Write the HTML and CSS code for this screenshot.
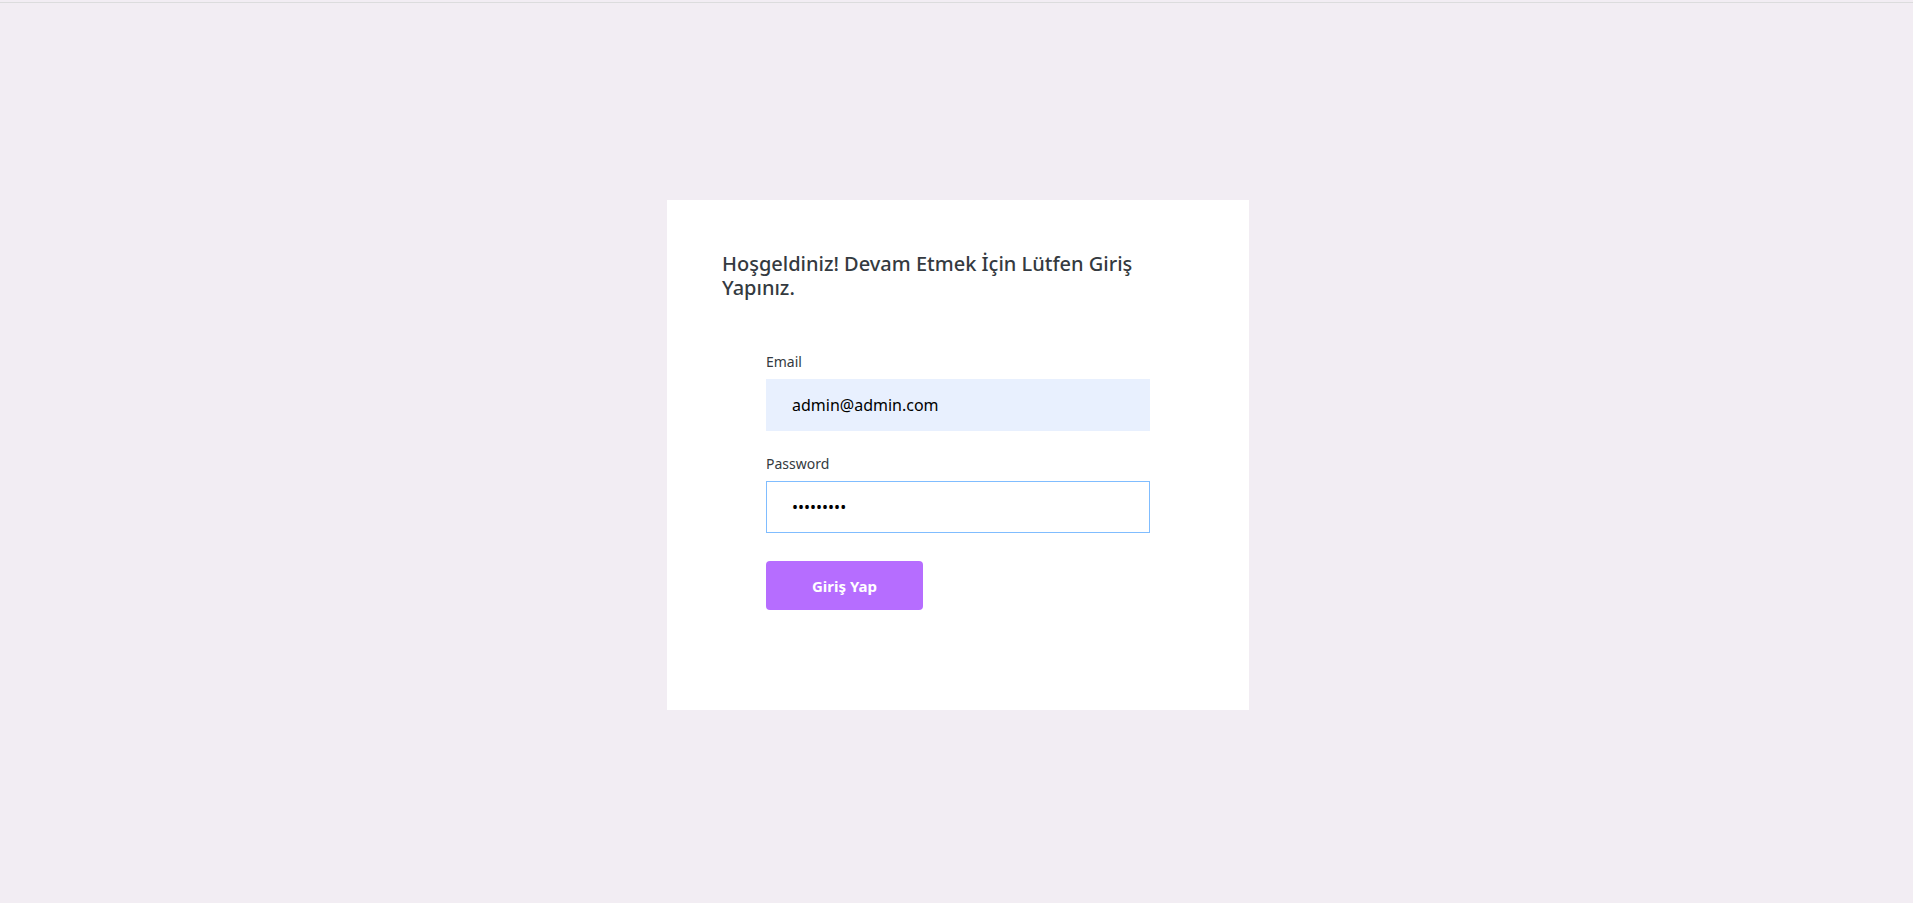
FILE: index.html
```html
<!DOCTYPE html>
<html lang="tr">
<head>
<meta charset="utf-8">
<title>Giriş</title>
<link rel="stylesheet" href="styles.css">
</head>
<body>
<div class="topline"></div>
<main class="page">
  <section class="card">
    <h4 class="title">Hoşgeldiniz! Devam Etmek İçin Lütfen Giriş Yapınız.</h4>
    <form class="form">
      <div class="group">
        <label class="label" for="email">Email</label>
        <input class="input input-filled" id="email" type="text" value="admin@admin.com">
      </div>
      <div class="group">
        <label class="label" for="password">Password</label>
        <input class="input input-focus" id="password" type="password" value="123456789">
      </div>
      <button class="btn" type="button">Giriş Yap</button>
    </form>
  </section>
</main>
</body>
</html>
```
FILE: styles.css
```css
* { box-sizing: border-box; }
html, body { margin: 0; padding: 0; }
body {
  background: #f2edf3;
  font-family: "Noto Sans", "Open Sans", sans-serif;
  color: #343a40;
  overflow: hidden;
}
.topline {
  height: 3px;
  border-bottom: 1px solid #dcdcdd;
  background: #f2edf3;
}
.page {
  height: 900px;
  padding: 4px 0 0 3px;
  display: flex;
  align-items: center;
  justify-content: center;
}
.card {
  width: 582px;
  height: 510px;
  background: #fff;
  padding: 52px 55px 0 55px;
}
.title {
  margin: 0;
  font-size: 20px;
  font-weight: 500;
  line-height: 24px;
  color: #343a40;
}
.form {
  margin: 53px 0 0 44px;
  width: 384px;
}
.group { margin-bottom: 24px; }
.group + .group { margin-bottom: 28px; }
.label {
  display: block;
  font-size: 14px;
  line-height: 18px;
  color: #343a40;
  margin-bottom: 8px;
}
.input {
  display: block;
  width: 384px;
  height: 52px;
  padding: 0 25px;
  border: 1px solid transparent;
  font-family: inherit;
  font-size: 16px;
  color: #000;
  outline: none;
}
.input-filled { background: #e8f0fe; border-color: #e8f0fe; }
.input-focus { background: #fff; border-color: #80bdff; }
.btn {
  display: block;
  width: 157px;
  height: 49px;
  border: 0;
  border-radius: 4px;
  background: #b66dff;
  color: #fff;
  font-family: inherit;
  font-size: 15px;
  font-weight: 700;
  cursor: pointer;
}
```
